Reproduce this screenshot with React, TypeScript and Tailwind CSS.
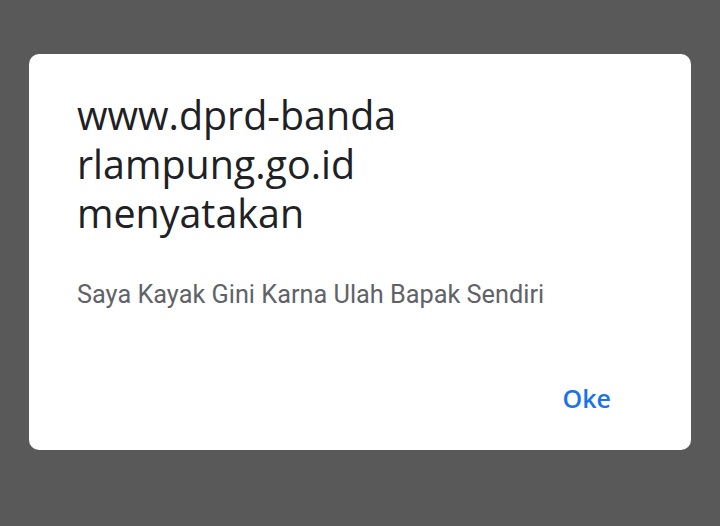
export default function App() {
  return (
    <div className="flex h-[526px] w-[720px] items-start justify-center bg-[#595959] pt-[54px]">
      <div className="flex h-[396px] w-[662px] flex-col rounded-[10px] bg-white pl-[48px] pr-[80px] pt-[37px]">
        <h1
          className="text-[39.4px] leading-[49px] text-[#202124]"
          style={{ fontFamily: '"Open Sans", sans-serif' }}
        >
          www.dprd-banda
          <br />
          rlampung.go.id
          <br />
          menyatakan
        </h1>
        <p
          className="mt-[42px] text-[25.3px] leading-[30px] text-[#5f6368]"
          style={{ fontFamily: 'Roboto, sans-serif' }}
        >
          Saya Kayak Gini Karna Ulah Bapak Sendiri
        </p>
        <div className="mt-auto mb-[37px] flex justify-end">
          <button
            className="text-[25px] font-semibold leading-[30px] text-[#1a73e8]"
            style={{ fontFamily: '"Open Sans", sans-serif' }}
          >
            Oke
          </button>
        </div>
      </div>
    </div>
  );
}
